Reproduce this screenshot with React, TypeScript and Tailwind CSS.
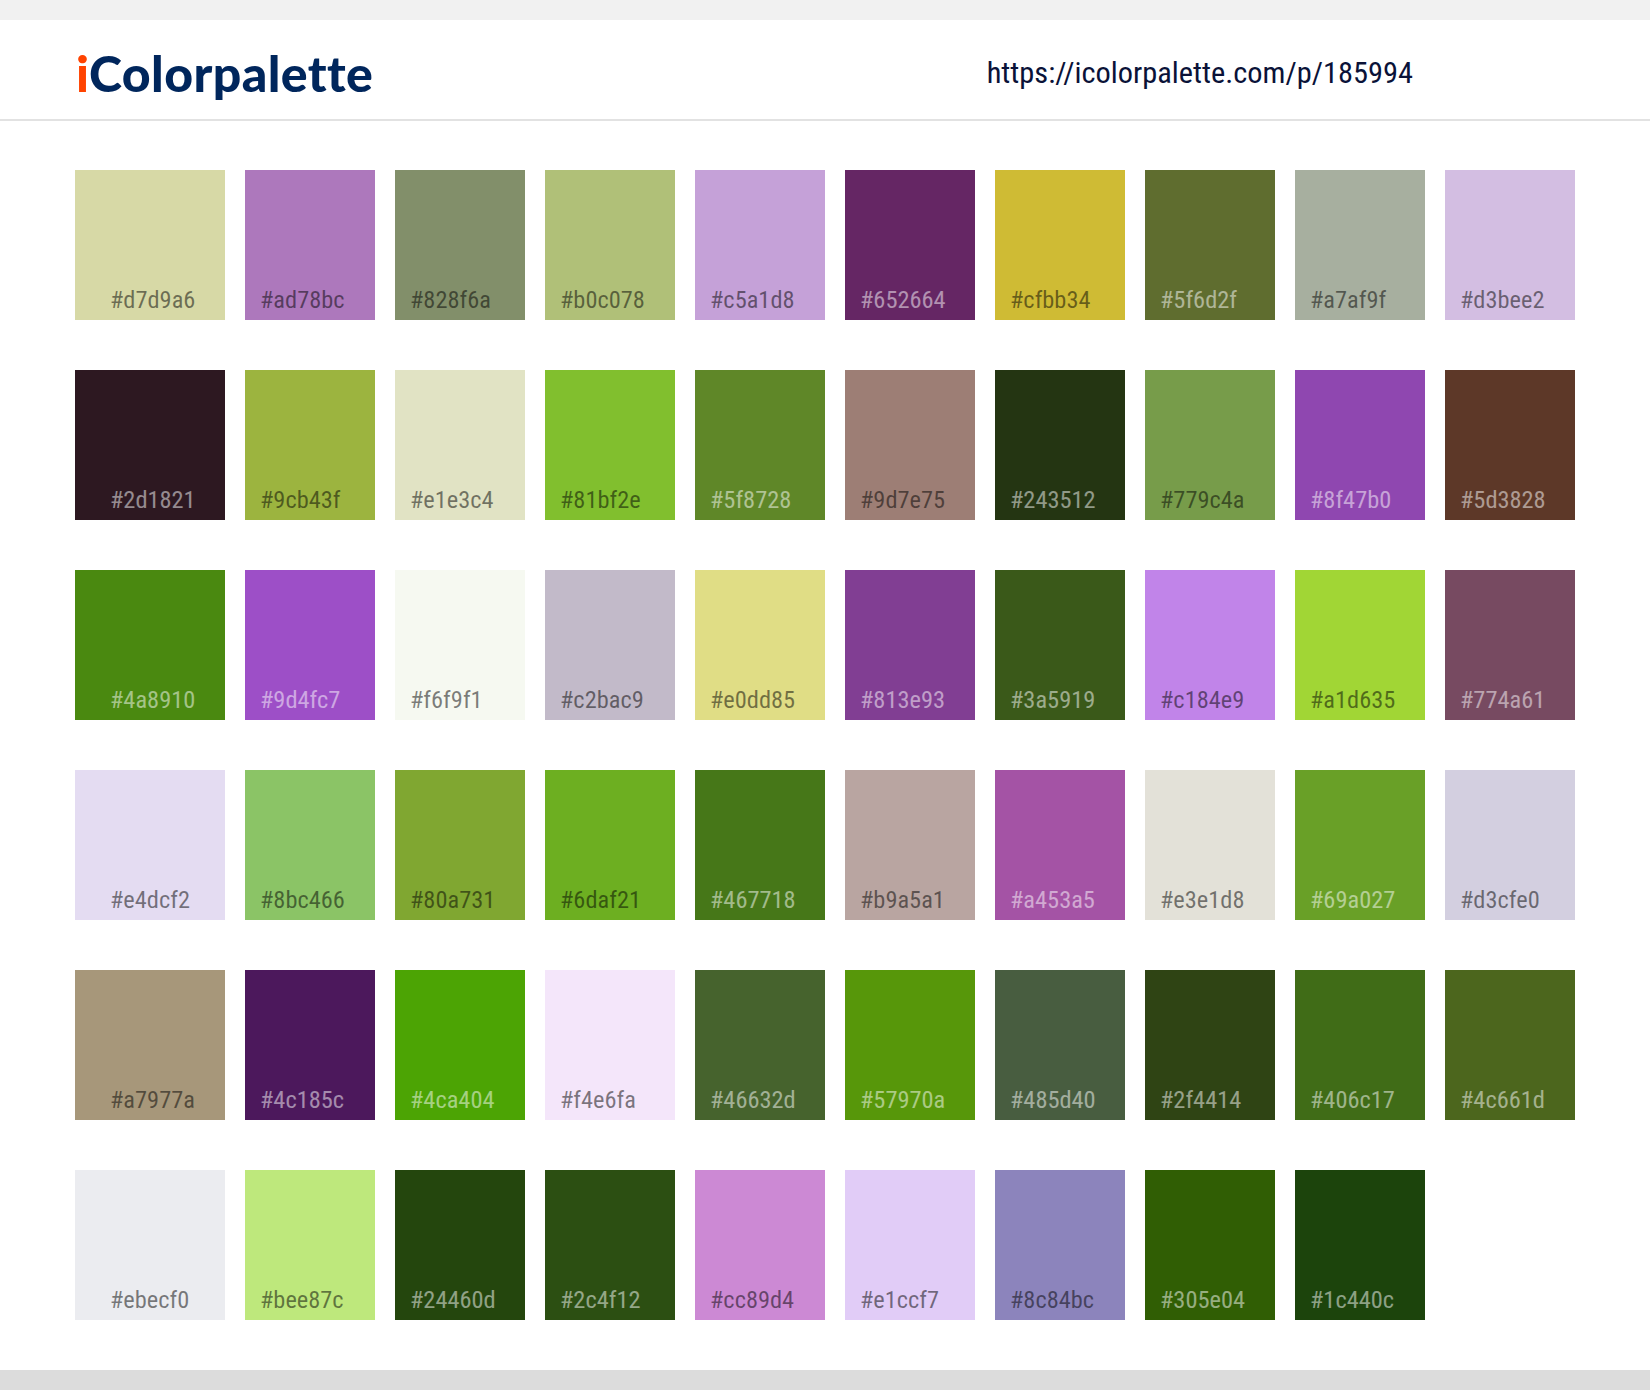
const colors = [
  "#d7d9a6", "#ad78bc", "#828f6a", "#b0c078", "#c5a1d8", "#652664", "#cfbb34", "#5f6d2f", "#a7af9f", "#d3bee2",
  "#2d1821", "#9cb43f", "#e1e3c4", "#81bf2e", "#5f8728", "#9d7e75", "#243512", "#779c4a", "#8f47b0", "#5d3828",
  "#4a8910", "#9d4fc7", "#f6f9f1", "#c2bac9", "#e0dd85", "#813e93", "#3a5919", "#c184e9", "#a1d635", "#774a61",
  "#e4dcf2", "#8bc466", "#80a731", "#6daf21", "#467718", "#b9a5a1", "#a453a5", "#e3e1d8", "#69a027", "#d3cfe0",
  "#a7977a", "#4c185c", "#4ca404", "#f4e6fa", "#46632d", "#57970a", "#485d40", "#2f4414", "#406c17", "#4c661d",
  "#ebecf0", "#bee87c", "#24460d", "#2c4f12", "#cc89d4", "#e1ccf7", "#8c84bc", "#305e04", "#1c440c",
];

function isDark(hex: string) {
  const r = parseInt(hex.slice(1, 3), 16);
  const g = parseInt(hex.slice(3, 5), 16);
  const b = parseInt(hex.slice(5, 7), 16);
  return 0.299 * r + 0.587 * g + 0.114 * b < 130;
}

export default function App() {
  return (
    <div className="min-h-[1390px] w-[1650px] bg-white flex flex-col">
      <div className="h-5 bg-[#f1f1f1]" />
      <header className="h-[101px] flex items-center justify-between border-b-2 border-[#e2e2e2] pl-[76px] pr-[237px]">
        <span className="font-['Lato'] font-black text-[50px] tracking-[0.4px] text-[#00265c] pt-2">
          <span className="text-[#ff4300]">i</span>Colorpalette
        </span>
        <span className="font-['Roboto'] font-stretch-condensed text-[30.4px] text-[#0a1238] pt-[7px]">
          https://icolorpalette.com/p/185994
        </span>
      </header>
      <main className="flex-1 grid grid-cols-[150px_repeat(9,130px)] gap-x-5 gap-y-[50px] content-start pl-[75px] pt-[49px]">
        {colors.map((hex, i) => (
          <div
            key={hex}
            className={`h-[150px] flex items-end pb-px font-['Roboto'] font-stretch-condensed text-[24.4px] ${
              i % 10 === 0 ? "pl-[35px]" : "pl-[15px]"
            } ${isDark(hex) ? "text-white/50" : "text-black/50"}`}
            style={{ backgroundColor: hex }}
          >
            {hex}
          </div>
        ))}
      </main>
      <div className="h-5 bg-[#dcdcdc]" />
    </div>
  );
}
